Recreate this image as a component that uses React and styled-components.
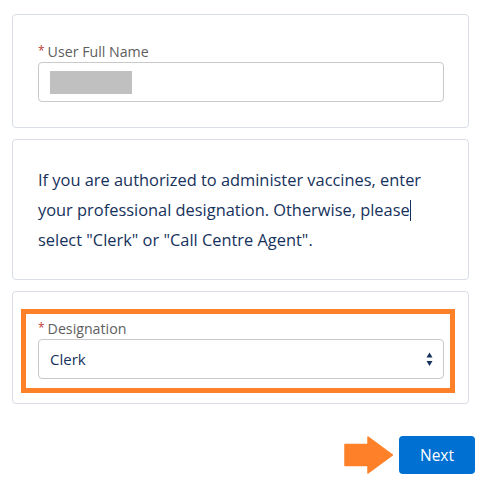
import React from 'react';
import styled, { createGlobalStyle } from 'styled-components';

const GlobalStyle = createGlobalStyle`
  body {
    margin: 0;
    background: #ffffff;
    font-family: "Open Sans", "Noto Sans", sans-serif;
  }
`;

const Page = styled.div`
  width: 490px;
  padding: 14px 0 0 12px;
  box-sizing: border-box;
  display: flex;
  flex-direction: column;
  gap: 11px;
`;

const Card = styled.div`
  width: 457px;
  box-sizing: border-box;
  border: 1px solid #d8dde6;
  border-radius: 4px;
  background: #fff;
  padding: ${(props) => props.pad};
`;

const Highlight = styled.div`
  border: 5px solid #fe8129;
  padding: 5px 6px 9px 12px;
`;

const Label = styled.div`
  display: flex;
  align-items: center;
  gap: 3px;
  height: 18px;
  margin-bottom: 2px;
  font-size: 14.2px;
  color: #5e5e5e;
`;

const Required = styled.span`
  color: #c23934;
  font-size: 12px;
  position: relative;
  top: -1px;
`;

const Box = styled.div`
  height: 40px;
  box-sizing: border-box;
  border: 1px solid #c9c9c9;
  border-radius: 4px;
  background: #fff;
  display: flex;
  align-items: center;
  justify-content: space-between;
  padding: 0 10px 0 11px;
  font-size: 15px;
  color: #16325c;
`;

const Redacted = styled.div`
  width: 82px;
  height: 23px;
  background: #c0c0c0;
`;

const Message = styled.p`
  margin: 0;
  font-size: 16.4px;
  line-height: 30px;
  color: #16325c;
  white-space: nowrap;
`;

const Caret = styled.span`
  display: inline-block;
  width: 1px;
  height: 21px;
  background: #16325c;
  vertical-align: -5px;
`;

const Footer = styled.div`
  display: flex;
  justify-content: flex-end;
  align-items: center;
  gap: 6px;
  padding-right: 15px;
  margin-top: 21px;
`;

const NextButton = styled.button`
  width: 76px;
  height: 38px;
  border: none;
  border-radius: 4px;
  background: #0070d2;
  color: #fff;
  font-family: "Open Sans", "Noto Sans", sans-serif;
  font-size: 15.5px;
  cursor: pointer;
`;

const Field = ({ label, children }) => (
  <div>
    <Label>
      <Required>*</Required>
      {label}
    </Label>
    {children}
  </div>
);

export default function App() {
  return (
    <>
      <GlobalStyle />
      <Page>
        <Card pad="27px 24px 25px 25px">
          <Field label="User Full Name">
            <Box>
              <Redacted />
            </Box>
          </Field>
        </Card>
        <Card pad="25px 10px 24px 25px">
          <Message>
            If you are authorized to administer vaccines, enter
            <br />
            your professional designation. Otherwise, please<Caret />
            <br />
            select "Clerk" or "Call Centre Agent".
          </Message>
        </Card>
        <Card pad="17px 13px 10px 8px">
          <Highlight>
            <Field label="Designation">
              <Box>
                Clerk
                <svg width="7" height="18" viewBox="0 0 7 18">
                  <path d="M3.5 2.5 L6.5 7.5 L0.5 7.5 Z" fill="#16325c" />
                  <path d="M0.5 11 L6.5 11 L3.5 16 Z" fill="#16325c" />
                </svg>
              </Box>
            </Field>
          </Highlight>
        </Card>
        <Footer>
          <svg width="49" height="38" viewBox="0 0 49 38">
            <path
              d="M1 8.5 H24 V1 L48.5 19 L24 37 V29.5 H1 Z"
              fill="#fe8129"
              stroke="#fe8129"
              strokeWidth="1.5"
              strokeLinejoin="round"
            />
          </svg>
          <NextButton>Next</NextButton>
        </Footer>
      </Page>
    </>
  );
}
